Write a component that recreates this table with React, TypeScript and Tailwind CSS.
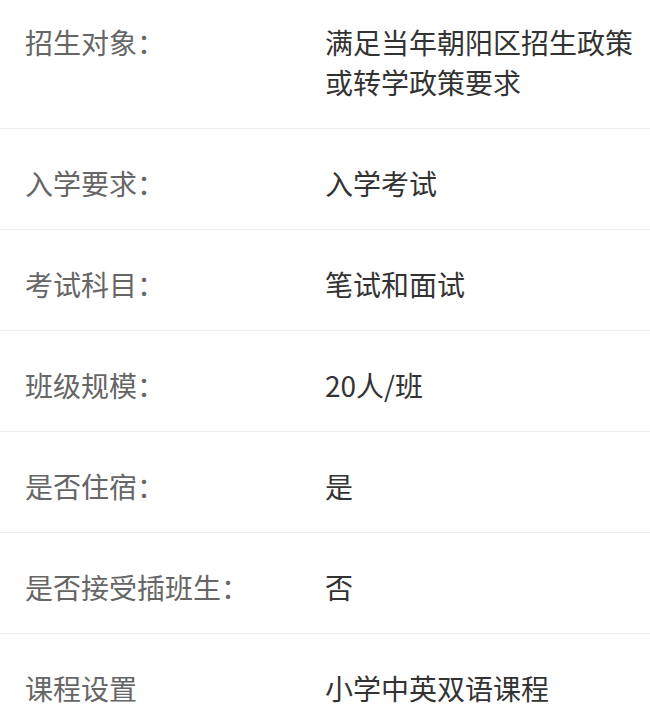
import React from "react";

const rows: { label: string; value: string }[] = [
  { label: "招生对象：", value: "满足当年朝阳区招生政策或转学政策要求" },
  { label: "入学要求：", value: "入学考试" },
  { label: "考试科目：", value: "笔试和面试" },
  { label: "班级规模：", value: "20人/班" },
  { label: "是否住宿：", value: "是" },
  { label: "是否接受插班生：", value: "否" },
  { label: "课程设置", value: "小学中英双语课程" },
];

export default function App() {
  return (
    <div
      className="w-[650px] bg-white"
      style={{ fontFamily: '"Noto Sans CJK SC", "Noto Sans", sans-serif' }}
    >
      {rows.map((r, i) => (
        <div
          key={i}
          className="flex flex-col justify-end min-h-[101px] border-b border-[#eeeeee] pt-[22px] pb-[26px] pl-[25px] pr-[12px] text-[28px] leading-[40px]"
        >
          <div className="flex items-start">
            <div className="w-[300px] shrink-0 text-[#666666] whitespace-nowrap">{r.label}</div>
            <div className="flex-1 text-[#333333]">{r.value}</div>
          </div>
        </div>
      ))}
    </div>
  );
}
